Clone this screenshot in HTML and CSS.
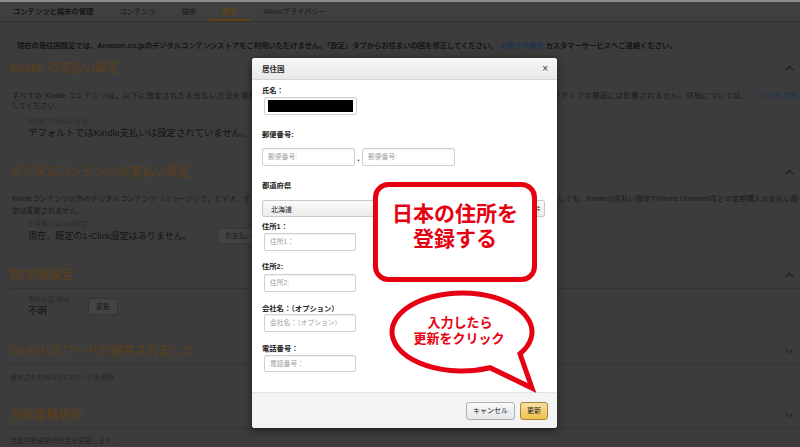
FILE: index.html
```html
<!DOCTYPE html>
<html lang="ja">
<head>
<meta charset="utf-8">
<title>設定</title>
<link rel="stylesheet" href="styles.css">
</head>
<body>
<div class="page">
  <div class="top-strip"></div>
  <nav class="nav">
    <span class="tab tab-main">コンテンツと端末の管理</span>
    <span class="tab">コンテンツ</span>
    <span class="tab">端末</span>
    <span class="tab tab-active">設定</span>
    <span class="tab">Alexaプライバシー</span>
  </nav>
  <div class="subbar"></div>
  <div class="notice">現在の居住国設定では、Amazon.co.jpのデジタルコンテンツストアをご利用いただけません。「設定」タブからお住まいの国を修正してください。 <span class="link">お困りの場合</span> カスタマーサービスへご連絡ください。</div>

  <section class="sec sec1">
    <div class="sec-head"><h2>Kindle の支払い設定</h2><svg class="chev" width="9" height="6" viewBox="0 0 9 6"><polyline points="1,5 4.5,1.5 8,5" fill="none" stroke="#1e1e1e" stroke-width="1.4"/></svg></div>
    <div class="para">
      <div class="jline">すべての Kindle コンテンツは、以下に指定されたお支払い方法を使用して購入されます。お支払い方法を変更しても、既存のサービスや現在ご利用中のアクティブな購読には影響されません。詳細については、 <span class="link">こちらを参照</span></div>
      <div class="pline">してください。</div>
    </div>
    <div class="kv">
      <div class="kv-label">Kindle の支払い方法</div>
      <div class="kv-value">デフォルトではKindle支払いは設定されていません。</div>
    </div>
  </section>

  <section class="sec sec2">
    <div class="sec-head"><h2>デジタルコンテンツの支払い設定</h2><svg class="chev" width="9" height="6" viewBox="0 0 9 6"><polyline points="1,5 4.5,1.5 8,5" fill="none" stroke="#1e1e1e" stroke-width="1.4"/></svg></div>
    <div class="para para2">
      <div class="jline">Kindleコンテンツ以外のデジタルコンテンツ（ミュージック、ビデオ、ゲームなど）の購入には、こちらで指定されたお支払い方法が使用されます。1-Click設定を変更しても、Kindleの支払い設定やKindle Unlimitedなどの定期購入の支払い設</div>
      <div class="pline">定は変更されません。</div>
    </div>
    <div class="kv kv2">
      <div class="kv-label">お客様の1-Click設定</div>
      <div class="kv-row"><span class="kv-value">現在、既定の1-Click設定はありません。</span><span class="bg-btn">お支払い方法を追加</span></div>
    </div>
  </section>

  <section class="sec sec3">
    <div class="sec-head ruled"><h2>国/地域設定</h2><svg class="chev" width="9" height="6" viewBox="0 0 9 6"><polyline points="1,5 4.5,1.5 8,5" fill="none" stroke="#1e1e1e" stroke-width="1.4"/></svg></div>
    <div class="kv kv3">
      <div class="kv-stack">
        <div class="kv-label">現在の国/地域</div>
        <div class="kv-value">不明</div>
      </div>
      <span class="bg-btn bg-btn2">変更</span>
    </div>
  </section>

  <section class="sec sec4">
    <div class="sec-head ruled"><h2>Wi-Fiパスワードが保存されました</h2><svg class="chev" width="9" height="6" viewBox="0 0 9 6"><polyline points="1,1.5 4.5,5 8,1.5" fill="none" stroke="#2a2a2a" stroke-width="1.2"/></svg></div>
    <div class="sec-text">保存されたWi-Fiパスワードを削除</div>
  </section>

  <section class="sec sec5">
    <div class="sec-head ruled"><h2>自動書籍更新</h2><svg class="chev" width="9" height="6" viewBox="0 0 9 6"><polyline points="1,1.5 4.5,5 8,1.5" fill="none" stroke="#2a2a2a" stroke-width="1.2"/></svg></div>
    <div class="sec-text">自動書籍更新の設定を変更します。</div>
  </section>
</div>

<div class="modal">
  <div class="modal-head"><span>居住国</span><span class="close">×</span></div>
  <div class="modal-body">
    <div class="f-label l-name">氏名：</div>
    <div class="inp inp-name"><div class="redact"></div></div>

    <div class="f-label l-zip">郵便番号:</div>
    <div class="zip-row">
      <div class="inp inp-zip">郵便番号:</div>
      <span class="zip-dot">.</span>
      <div class="inp inp-zip">郵便番号:</div>
    </div>

    <div class="f-label l-pref">都道府県</div>
    <div class="select"><span>北海道</span><svg width="5" height="7" viewBox="0 0 5 7"><path d="M0.5 3 L2.5 0.8 L4.5 3 Z M0.5 4 L2.5 6.2 L4.5 4 Z" fill="#777"/></svg></div>

    <div class="f-label l-a1">住所1：</div>
    <div class="inp inp-a1">住所1：</div>

    <div class="f-label l-a2">住所2:</div>
    <div class="inp inp-a2">住所2:</div>

    <div class="f-label l-co">会社名：（オプション）</div>
    <div class="inp inp-co">会社名：（オプション）</div>

    <div class="f-label l-tel">電話番号：</div>
    <div class="inp inp-tel">電話番号：</div>
  </div>
  <div class="modal-foot">
    <span class="btn btn-cancel">キャンセル</span>
    <span class="btn btn-primary">更新</span>
  </div>
</div>

<svg class="annot" width="800" height="447" viewBox="0 0 800 447">
  <rect x="375.5" y="184.5" width="159" height="95" rx="13" ry="13" fill="#fff" stroke="#e60012" stroke-width="5"/>
  <text x="455" y="220.5" class="annot-big">日本の住所を</text>
  <text x="455" y="246" class="annot-big">登録する</text>
  <path d="M520 353.8 A70 39 0 1 0 490 367.7 L532 388 Z" fill="#fff" stroke="#e60012" stroke-width="5" stroke-linejoin="miter"/>
  <text x="460" y="327" class="annot-small">入力したら</text>
  <text x="459" y="343" class="annot-small">更新をクリック</text>
</svg>
</body>
</html>
```

FILE: styles.css
```css
* { box-sizing: border-box; }
html, body { margin: 0; padding: 0; }
body {
  width: 800px;
  height: 447px;
  overflow: hidden;
  background: #3c3c3c;
  font-family: "Liberation Sans", "Noto Sans CJK JP", sans-serif;
  color: #191919;
  position: relative;
}
.page { width: 800px; }
.top-strip { height: 2px; background: #8d8d8d; }
.nav {
  height: 20px;
  display: flex;
  align-items: stretch;
  background: #3f3f3f;
  border-bottom: 1px solid #303030;
  font-size: 7.3px;
  font-weight: bold;
}
.tab {
  padding: 0 13px;
  display: flex;
  align-items: center;
  color: #262626;
  border-bottom: 2px solid transparent;
}
.tab-main { color: #161616; }
.tab-active { color: #634419; border-bottom-color: #634419; }
.subbar { height: 14px; border-bottom: 1px solid #363636; background: #3c3c3c; }
.notice {
  height: 21px;
  line-height: 20px;
  padding-left: 17px;
  font-size: 7.3px;
  font-weight: bold;
  color: #141414;
  white-space: nowrap;
}
.link { color: #1c3350; }

.sec { padding-left: 10px; }
.sec-head {
  display: flex;
  align-items: center;
  justify-content: space-between;
  height: 16px;
}
.sec-head.ruled {
  height: 22px;
  padding-bottom: 5px;
  border-bottom: 1px solid #333;
  align-items: center;
}
.sec-head h2 {
  margin: 0;
  font-size: 12px;
  font-weight: normal;
  color: #603f17;
  line-height: 16px;
}
.chev { margin-right: 6px; }

.sec1 { margin-top: 3px; }
.para { margin-top: 15px; padding-left: 2px; font-size: 7.2px; color: #1a1a1a; }
.jline {
  line-height: 10px;
  white-space: nowrap;
  overflow: hidden;
  text-align: justify;
  text-align-last: justify;
  width: 786px;
}
.pline { line-height: 10px; }
.para2 { margin-top: 13px; }
.para2 .jline, .para2 .pline { line-height: 12px; }

.kv { padding-left: 18px; margin-top: 5px; }
.kv-label { font-size: 6.6px; line-height: 10px; color: #2c2c2c; }
.kv-value { font-size: 9.4px; line-height: 14px; color: #141414; }

.sec2 { margin-top: 24px; }
.kv2 { margin-top: 2px; }
.kv-row { display: flex; align-items: center; height: 16px; margin-top: -1px; }
.kv-row .kv-value { font-size: 9.1px; }
.bg-btn {
  margin-left: 25px;
  height: 16px;
  line-height: 14px;
  padding: 0 7px;
  font-size: 6.8px;
  color: #1a1a1a;
  background: #434343;
  border: 1px solid #353535;
  border-radius: 2px;
  white-space: nowrap;
}

.sec3 { margin-top: 23px; }
.kv3 { display: flex; align-items: center; margin-top: 6px; }
.kv-stack { width: 60px; }
.kv3 .kv-value { line-height: 12px; font-size: 9.4px; }
.bg-btn2 { margin-left: 0; height: 17px; line-height: 15px; padding: 0 7px; }

.sec4 { margin-top: 26px; }
.sec-text { font-size: 6.8px; line-height: 10px; color: #262626; margin-top: 8px; }
.sec5 { margin-top: 24px; }
.sec5 .sec-text { margin-top: 7px; }

/* modal */
.modal {
  position: absolute;
  left: 252px;
  top: 58px;
  width: 305px;
  height: 370px;
  background: #fff;
  border-radius: 3px;
  box-shadow: 0 2px 8px rgba(0, 0, 0, 0.55);
  display: flex;
  flex-direction: column;
  overflow: hidden;
}
.modal-head {
  flex: none;
  height: 22px;
  background: linear-gradient(#f8f8f8, #e8e8e8);
  border-bottom: 1px solid #d6d6d6;
  display: flex;
  align-items: center;
  justify-content: space-between;
  padding: 0 9px 0 10px;
  font-size: 7.5px;
  font-weight: bold;
  color: #2a2a2a;
}
.close { font-size: 10px; font-weight: normal; color: #333; }
.modal-body {
  flex: 1;
  padding: 6px 0 0 10px;
  display: flex;
  flex-direction: column;
  align-items: flex-start;
}
.f-label { font-size: 7.3px; font-weight: bold; line-height: 10px; color: #222; }
.inp {
  height: 18px;
  width: 92px;
  border: 1px solid #d0d0d0;
  border-radius: 2px;
  font-size: 6.8px;
  color: #a0a0a0;
  line-height: 16px;
  padding-left: 5px;
  box-shadow: inset 0 1px 1px rgba(0, 0, 0, 0.06);
}
.inp-name { margin: 1px 0 0 2px; width: 93px; padding: 2px 3px; }
.redact { height: 12px; background: #000; }
.l-zip { margin-top: 15px; }
.zip-row { display: flex; align-items: center; margin-top: 8px; }
.inp-zip { width: 93px; }
.zip-dot { width: 7px; text-align: center; font-size: 9px; line-height: 9px; color: #333; font-weight: bold; padding-top: 2px; }
.l-pref { margin-top: 15px; }
.select {
  margin-top: 9px;
  width: 283px;
  height: 17px;
  border: 1px solid #c9c9c9;
  border-radius: 2px;
  background: linear-gradient(#fafafa, #ebebeb);
  display: flex;
  align-items: center;
  justify-content: space-between;
  padding: 0 3px 0 8px;
  font-size: 7px;
  color: #222;
}
.l-a1 { margin-top: 5px; }
.inp-a1 { margin: 1px 0 0 2px; }
.l-a2 { margin-top: 11px; }
.inp-a2 { margin: 2px 0 0 2px; }
.l-co { margin-top: 12px; }
.inp-co { margin: 0 0 0 2px; }
.l-tel { margin-top: 12px; }
.inp-tel { margin: 1px 0 0 2px; height: 17px; }

.modal-foot {
  flex: none;
  height: 36px;
  background: #f3f3f3;
  border-top: 1px solid #e3e3e3;
  display: flex;
  align-items: center;
  justify-content: flex-end;
  gap: 5px;
  padding-right: 9px;
}
.btn {
  height: 18px;
  line-height: 16px;
  font-size: 7px;
  border-radius: 3px;
  text-align: center;
  color: #222;
}
.btn-cancel {
  width: 49px;
  background: linear-gradient(#f8f9fa, #e5e7ea);
  border: 1px solid #adb1b8;
}
.btn-primary {
  width: 28px;
  background: linear-gradient(#f7dfa5, #f0c14b);
  border: 1px solid #a88734;
}

.annot { position: absolute; left: 0; top: 0; pointer-events: none; }
.annot-big {
  font-family: "Noto Sans CJK JP", sans-serif;
  font-weight: bold;
  font-size: 21px;
  fill: #e60012;
  text-anchor: middle;
}
.annot-small {
  font-family: "Noto Sans CJK JP", sans-serif;
  font-weight: bold;
  font-size: 13px;
  fill: #e60012;
  text-anchor: middle;
}
```
